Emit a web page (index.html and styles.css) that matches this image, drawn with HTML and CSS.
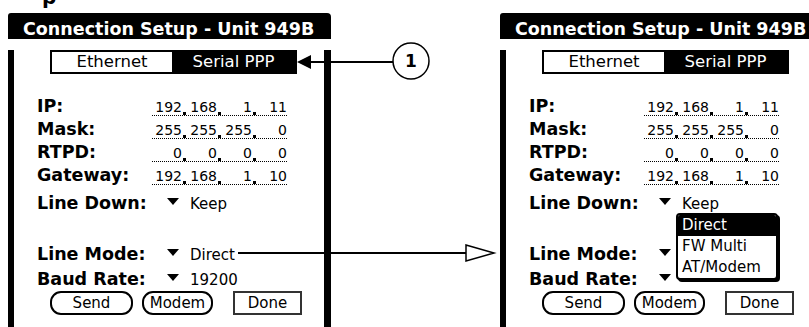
FILE: index.html
```html
<!DOCTYPE html>
<html lang="en">
<head>
<meta charset="utf-8">
<title>Connection Setup</title>
<link rel="stylesheet" href="styles.css">
</head>
<body>
<div class="page">
  <div class="cap"><span>p</span></div>
  <div class="stage">
    <section class="screen">
      <div class="title">Connection Setup - Unit 949B</div>
      <div class="body">
        <div class="seg"><span class="seg-off">Ethernet</span><span class="seg-on">Serial PPP</span></div>
        <div class="row r-first"><span class="lbl">IP:</span><span class="ipf"><span class="oct">192</span><i class="sep"></i><span class="oct">168</span><i class="sep"></i><span class="oct">1</span><i class="sep"></i><span class="oct">11</span></span></div>
        <div class="row"><span class="lbl">Mask:</span><span class="ipf"><span class="oct">255</span><i class="sep"></i><span class="oct">255</span><i class="sep"></i><span class="oct">255</span><i class="sep"></i><span class="oct">0</span></span></div>
        <div class="row"><span class="lbl">RTPD:</span><span class="ipf"><span class="oct">0</span><i class="sep"></i><span class="oct">0</span><i class="sep"></i><span class="oct">0</span><i class="sep"></i><span class="oct">0</span></span></div>
        <div class="row"><span class="lbl">Gateway:</span><span class="ipf"><span class="oct">192</span><i class="sep"></i><span class="oct">168</span><i class="sep"></i><span class="oct">1</span><i class="sep"></i><span class="oct">10</span></span></div>
        <div class="row r-down"><span class="lbl">Line Down:</span><span class="dd"><i class="tri"></i>Keep</span></div>
        <div class="row r-mode"><span class="lbl">Line Mode:</span><span class="dd"><i class="tri"></i>Direct</span></div>
        <div class="row r-baud"><span class="lbl">Baud Rate:</span><span class="dd"><i class="tri"></i>19200</span></div>
        <div class="btns"><span class="btn send">Send</span><span class="btn modem">Modem</span><span class="btn done">Done</span></div>
      </div>
    </section>
    <section class="screen">
      <div class="title">Connection Setup - Unit 949B</div>
      <div class="body">
        <div class="seg"><span class="seg-off">Ethernet</span><span class="seg-on">Serial PPP</span></div>
        <div class="row r-first"><span class="lbl">IP:</span><span class="ipf"><span class="oct">192</span><i class="sep"></i><span class="oct">168</span><i class="sep"></i><span class="oct">1</span><i class="sep"></i><span class="oct">11</span></span></div>
        <div class="row"><span class="lbl">Mask:</span><span class="ipf"><span class="oct">255</span><i class="sep"></i><span class="oct">255</span><i class="sep"></i><span class="oct">255</span><i class="sep"></i><span class="oct">0</span></span></div>
        <div class="row"><span class="lbl">RTPD:</span><span class="ipf"><span class="oct">0</span><i class="sep"></i><span class="oct">0</span><i class="sep"></i><span class="oct">0</span><i class="sep"></i><span class="oct">0</span></span></div>
        <div class="row"><span class="lbl">Gateway:</span><span class="ipf"><span class="oct">192</span><i class="sep"></i><span class="oct">168</span><i class="sep"></i><span class="oct">1</span><i class="sep"></i><span class="oct">10</span></span></div>
        <div class="row r-down"><span class="lbl">Line Down:</span><span class="dd"><i class="tri"></i>Keep</span></div>
        <div class="row r-mode"><span class="lbl">Line Mode:</span><span class="dd"><i class="tri"></i></span>
          <ul class="popup"><li class="sel">Direct</li><li>FW Multi</li><li>AT/Modem</li></ul>
        </div>
        <div class="row r-baud"><span class="lbl">Baud Rate:</span><span class="dd"><i class="tri"></i></span></div>
        <div class="btns"><span class="btn send">Send</span><span class="btn modem">Modem</span><span class="btn done">Done</span></div>
      </div>
    </section>
  </div>
  <svg class="callouts" width="809" height="327" viewBox="0 0 809 327">
    <line x1="309" y1="62" x2="393" y2="62" class="ln"/>
    <polygon points="297,62 311,55 311,69" class="head-fill"/>
    <circle cx="411" cy="61" r="18" class="ring"/>
    <text x="411" y="67" class="num">1</text>
    <line x1="238" y1="253" x2="466" y2="253" class="ln"/>
    <polygon points="466,245 494,253 466,261" class="head-open"/>
  </svg>
</div>
</body>
</html>
```
FILE: styles.css
```css
* { box-sizing: border-box; margin: 0; padding: 0; }
html, body { background: #fff; }
body { margin: 0; font-family: "DejaVu Sans", sans-serif; color: #000; }

.page { position: relative; width: 809px; height: 327px; overflow: hidden; padding-left: 8px; }

.cap { height: 13px; overflow: hidden; padding-left: 34px; font: bold 20px/20px "DejaVu Sans", sans-serif; }
.cap span { display: block; margin-top: -13px; }

.stage { display: flex; gap: 169px; }
.screen { width: 323px; flex: none; }

.title {
  height: 26px; background: #000; color: #fff;
  font: bold 17.5px/20px "DejaVu Sans", sans-serif;
  padding: 6px 0 0 15px; border-radius: 3px 4px 0 0; white-space: nowrap;
}
.body { height: 288px; border-left: 6px solid #000; border-right: 7px solid #000; }

.seg { display: flex; width: 247px; height: 24px; margin: 11px 0 0 36px; border: 2px solid #000; font-size: 16.5px; line-height: 20px; }
.seg span { display: flex; align-items: center; justify-content: center; }
.seg-off { width: 120px; }
.seg-on { flex: 1; background: #000; color: #fff; }

.row { position: relative; display: flex; align-items: baseline; height: 23px; padding-left: 23px; line-height: 23px; font-size: 15px; white-space: nowrap; }
.r-first { margin-top: 21px; }
.r-down { margin-top: 5px; }
.r-mode { margin-top: 28px; }
.r-baud { margin-top: 2px; }
.lbl { width: 115px; flex: none; font-weight: bold; font-size: 17.5px; }

.ipf { display: inline-flex; align-items: flex-end; border-bottom: 1px dotted #000; font-size: 14px; line-height: 15px; }
.oct { width: 30px; text-align: right; }
.sep { display: block; width: 3px; height: 3px; background: #000; margin: 0 1px; }

.dd { margin-left: 15px; }
.tri { display: inline-block; width: 0; height: 0; border-left: 6px solid transparent; border-right: 6px solid transparent; border-top: 7px solid #000; margin-right: 11px; vertical-align: 4px; }

.btns { display: flex; margin-left: 36px; height: 24px; }
.btn { height: 24px; border: 2px solid #000; border-radius: 11px; display: flex; align-items: center; justify-content: center; font-size: 15px; }
.send { width: 83px; }
.modem { width: 71px; margin-left: 9px; }
.done { width: 69px; margin-left: 20px; border-radius: 0; border-color: #333; }

.popup { position: absolute; left: 170px; top: -30px; width: 102px; border: 2px solid #000; border-radius: 4px; background: #fff; box-shadow: 2px 2px 0 #000; font-size: 15px; line-height: 21px; list-style: none; z-index: 2; }
.popup li { padding-left: 4px; }
.popup .sel { background: #000; color: #fff; border-radius: 2px 2px 0 0; }

.callouts { position: absolute; left: 0; top: 0; pointer-events: none; }
.ln { stroke: #000; stroke-width: 2; }
.head-fill { fill: #000; }
.head-open { fill: #fff; stroke: #000; stroke-width: 1.5; }
.ring { fill: #fff; stroke: #000; stroke-width: 1.5; }
.num { font-family: "DejaVu Sans", sans-serif; font-weight: bold; font-size: 17px; text-anchor: middle; }
```
